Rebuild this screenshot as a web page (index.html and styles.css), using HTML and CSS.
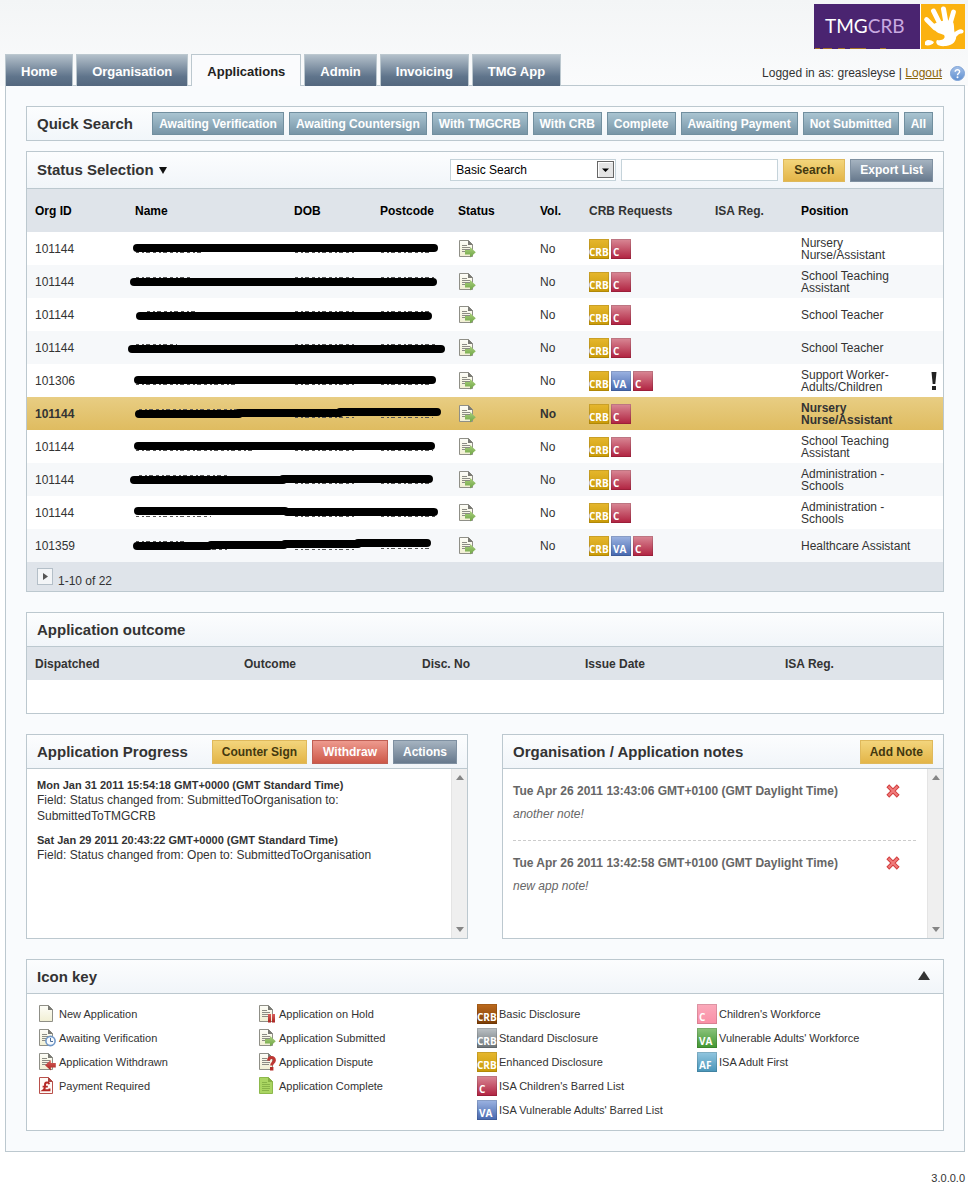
FILE: index.html
```html
<!DOCTYPE html>
<html lang="en">
<head>
<meta charset="utf-8">
<title>TMGCRB - Applications</title>
<link rel="stylesheet" href="styles.css">
</head>
<body>
<svg class="defs" width="0" height="0" aria-hidden="true">
  <defs>
    <linearGradient id="g-paper" x1="0" y1="0" x2="0" y2="1"><stop offset="0" stop-color="#fdfdf8"/><stop offset="1" stop-color="#f1efd3"/></linearGradient>
    <linearGradient id="g-green" x1="0" y1="0" x2="0" y2="1"><stop offset="0" stop-color="#a9d07c"/><stop offset="1" stop-color="#6da344"/></linearGradient>
    <linearGradient id="g-red" x1="0" y1="0" x2="0" y2="1"><stop offset="0" stop-color="#d9605c"/><stop offset="1" stop-color="#a82420"/></linearGradient>
    <linearGradient id="g-help" x1="0" y1="0" x2="0" y2="1"><stop offset="0" stop-color="#a5c1e8"/><stop offset="1" stop-color="#5f8fd0"/></linearGradient>
    <symbol id="page" viewBox="0 0 18 18">
      <path d="M1.500 .5H10.500L14.500 4.500V16.500H1.500Z" fill="url(#g-paper)" stroke="#8f8f87"/>
      <path d="M10 0L15 5H10Z" fill="#7b7b75"/>
    </symbol>
    <symbol id="lined" viewBox="0 0 18 18">
      <use href="#page" width="18" height="18"/>
      <path d="M4 5.500H9M4 7.500H12M4 9.500H12M4 11.500H11" stroke="#8c8c84" fill="none"/>
    </symbol>
    <symbol id="submitted" viewBox="0 0 18 18">
      <use href="#lined" width="18" height="18"/>
      <path d="M7 10H12V7L17.800 12.300L12 17.600V14.600H7Z" fill="url(#g-green)"/>
    </symbol>
    <symbol id="withdrawn" viewBox="0 0 18 18">
      <use href="#lined" width="18" height="18"/>
      <path d="M17.800 10H12.800V7L7 12.300L12.800 17.600V14.600H17.800Z" fill="url(#g-red)"/>
    </symbol>
    <symbol id="hold" viewBox="0 0 18 18">
      <use href="#lined" width="18" height="18"/>
      <path d="M10 9H13V17.500H10ZM14 9H17V17.500H14Z" fill="url(#g-red)"/>
    </symbol>
    <symbol id="verify" viewBox="0 0 18 18">
      <use href="#lined" width="18" height="18"/>
      <circle cx="12.500" cy="12" r="4.600" fill="#f8fbfe" stroke="#6f97c8" stroke-width="1.600"/>
      <path d="M12.500 9V12.500H15" fill="none" stroke="#4f6f9a"/>
    </symbol>
    <symbol id="dispute" viewBox="0 0 18 18">
      <use href="#lined" width="18" height="18"/>
      <path d="M10.500 7.600C10.700 3.400 16.800 3.500 16.400 7.500C16.200 9.800 13.600 9.700 13.600 12.600" fill="none" stroke="#bd3733" stroke-width="2.900"/>
      <rect x="12" y="14" width="3.400" height="3.500" fill="#b52e2a"/>
    </symbol>
    <symbol id="payment" viewBox="0 0 18 18">
      <path d="M1.500 .5H10.500L14.500 4.500V16.500H1.500Z" fill="#fffaf6" stroke="#b9504b"/>
      <path d="M10 0L15 5H10Z" fill="#a84440"/>
      <path d="M11.200 7.200C10.600 4.700 6.800 5 7 8C7.100 10 7.600 11.500 5.200 13.200H11.500V11.600M4.600 9.600H9.800" fill="none" stroke="#b52824" stroke-width="1.900"/>
    </symbol>
    <symbol id="complete" viewBox="0 0 18 18">
      <path d="M1.500 .5H10.500L14.500 4.500V16.500H1.500Z" fill="#aad562" stroke="#8db94c"/>
      <path d="M10 0L15 5H10Z" fill="#87b044"/>
      <path d="M4 5.500H9M4 7.500H12M4 9.500H12M4 11.500H12M4 13.500H11" stroke="#88b348" fill="none"/>
    </symbol>
    <symbol id="delete" viewBox="0 0 14 14">
      <path d="M3.200 3.200L10.800 10.800M10.800 3.200L3.200 10.800" stroke="#d23f3f" stroke-width="4" stroke-linecap="square"/>
      <path d="M2.500 2.500L11.500 11.500M11.500 2.500L2.500 11.500" stroke="#f07c7c" stroke-width="2"/>
    </symbol>
    <symbol id="arrow-up" viewBox="0 0 8 5"><path d="M4 0L8 5H0Z" fill="#858585"/></symbol>
    <symbol id="arrow-down" viewBox="0 0 8 5"><path d="M0 0H8L4 5Z" fill="#858585"/></symbol>
  </defs>
</svg>

<header class="top">
  <nav class="tabs" aria-label="Main">
    <a class="tab" href="#home">Home</a>
    <a class="tab" href="#organisation">Organisation</a>
    <a class="tab tab-active" href="#applications" aria-current="page">Applications</a>
    <a class="tab" href="#admin">Admin</a>
    <a class="tab" href="#invoicing">Invoicing</a>
    <a class="tab" href="#app">TMG App</a>
  </nav>
  <div class="account">
    <svg class="logo" width="151" height="45" viewBox="0 0 151 45" role="img" aria-label="TMGCRB">
      <rect width="151" height="45" fill="#fff"/>
      <rect width="106" height="45" fill="#4a2470"/>
      <rect x="107" width="44" height="45" fill="#fbb210"/>
      <text class="logo-text" x="11" y="29" fill="#fff">TMG<tspan fill="#c9aae0">CRB</tspan></text>
      <path d="M1 44.500H6M9 44.500H18M24 44.500H31M36 44.500H52M66 44.500H72" stroke="#a87428"/>
      <g fill="none" stroke="#fff" stroke-linecap="round" stroke-linejoin="round">
        <path d="M112.500 15.500L121 24" stroke-width="4.600"/>
        <path d="M119.500 7L126 20" stroke-width="5"/>
        <path d="M129.500 5L132 19" stroke-width="5"/>
        <path d="M139.500 8L136 20" stroke-width="4.800"/>
        <path d="M147.500 27.500C144 27 142 30 139 33" stroke-width="4.200"/>
      </g>
      <path d="M118 21C124 17 134 15 139 18C141 22 139 27 142 31C143 37 139 41 132 42C123 43 121 39 123 36C129 37 132 34 130 31C127 29 122 31 118 21Z" fill="#fff"/>
      <path d="M111 38C113 35 117 36 120 38C119 41 114 42 111 41Z" fill="#fff"/>
    </svg>
    <p class="login">Logged in as: greasleyse | <a class="logout" href="#logout">Logout</a><a class="help" href="#help" aria-label="Help"><svg width="15" height="15" viewBox="0 0 15 15" aria-hidden="true"><circle cx="7.500" cy="7.500" r="7" fill="url(#g-help)" stroke="#7fa3d6"/><path d="M5.200 5.700C5.400 3.100 9.800 3.200 9.600 5.700C9.500 7.200 7.500 7.300 7.500 9.200" fill="none" stroke="#fff" stroke-width="1.500"/><circle cx="7.500" cy="11.300" r="1" fill="#fff"/></svg></a></p>
  </div>
</header>

<main class="shell">
  <section class="panel quick">
    <h2 class="title">Quick Search</h2>
    <div class="buttons">
      <button class="btn btn-filter">Awaiting Verification</button>
      <button class="btn btn-filter">Awaiting Countersign</button>
      <button class="btn btn-filter">With TMGCRB</button>
      <button class="btn btn-filter">With CRB</button>
      <button class="btn btn-filter">Complete</button>
      <button class="btn btn-filter">Awaiting Payment</button>
      <button class="btn btn-filter">Not Submitted</button>
      <button class="btn btn-filter">All</button>
    </div>
  </section>

  <section class="panel list-panel">
    <div class="head head-tall">
      <h2 class="title"><button class="toggle">Status Selection <svg width="8" height="7" viewBox="0 0 8 7" aria-hidden="true"><path d="M0 0H8L4 7Z" fill="#111"/></svg></button></h2>
      <form class="buttons" role="search">
        <span class="select-wrap">
          <select class="select" aria-label="Search type"><option>Basic Search</option></select>
          <svg class="select-arrow" width="17" height="17" viewBox="0 0 17 17" aria-hidden="true"><rect x=".5" y=".5" width="16" height="16" fill="#e4e4e4" stroke="#666"/><path d="M1.500 15.500V1.500H15.500" fill="none" stroke="#fff"/><path d="M5 7.500H12L8.500 11Z" fill="#000"/></svg>
        </span>
        <input class="input" type="text" aria-label="Search text">
        <button class="btn btn-gold btn-search" type="button">Search</button>
        <button class="btn btn-slate" type="button">Export List</button>
      </form>
    </div>
    <table class="grid apps">
      <colgroup><col class="w-org"><col class="w-name"><col class="w-dob"><col class="w-post"><col class="w-status"><col class="w-vol"><col class="w-crb"><col class="w-isa"><col><col class="w-flag"></colgroup>
      <thead><tr><th>Org ID</th><th>Name</th><th>DOB</th><th>Postcode</th><th>Status</th><th>Vol.</th><th class="soft">CRB Requests</th><th class="soft">ISA Reg.</th><th>Position</th><th></th></tr></thead>
      <tbody>
        <tr><td>101144</td><td class="hidden-data" colspan="3"><svg width="323" height="33" role="img" aria-label="Redacted"><path class="trace" d="M9 20.500H75M168 20.500H229M254 20.500H303"/><path class="bar" d="M10 16H307"/></svg></td><td><svg class="doc" role="img" aria-label="Application Submitted"><use href="#submitted"/></svg></td><td>No</td><td><span class="badges"><span class="badge enhanced">CRB</span><span class="badge child">C</span></span></td><td></td><td>Nursery Nurse/Assistant</td><td></td></tr>
        <tr><td>101144</td><td class="hidden-data" colspan="3"><svg width="323" height="33" role="img" aria-label="Redacted"><path class="trace" d="M9 12.500H63M168 12.500H229M254 12.500H307"/><path class="bar" d="M7 17H306"/></svg></td><td><svg class="doc" role="img" aria-label="Application Submitted"><use href="#submitted"/></svg></td><td>No</td><td><span class="badges"><span class="badge enhanced">CRB</span><span class="badge child">C</span></span></td><td></td><td>School Teaching Assistant</td><td></td></tr>
        <tr><td>101144</td><td class="hidden-data" colspan="3"><svg width="323" height="33" role="img" aria-label="Redacted"><path class="trace" d="M20 13.500H71M168 13.500H229M254 13.500H303"/><path class="bar" d="M13 18H301"/></svg></td><td><svg class="doc" role="img" aria-label="Application Submitted"><use href="#submitted"/></svg></td><td>No</td><td><span class="badges"><span class="badge enhanced">CRB</span><span class="badge child">C</span></span></td><td></td><td>School Teacher</td><td></td></tr>
        <tr><td>101144</td><td class="hidden-data" colspan="3"><svg width="323" height="33" role="img" aria-label="Redacted"><path class="trace" d="M9 13.500H50M168 13.500H229M254 13.500H309"/><path class="bar" d="M5 18H314"/></svg></td><td><svg class="doc" role="img" aria-label="Application Submitted"><use href="#submitted"/></svg></td><td>No</td><td><span class="badges"><span class="badge enhanced">CRB</span><span class="badge child">C</span></span></td><td></td><td>School Teacher</td><td></td></tr>
        <tr><td>101306</td><td class="hidden-data" colspan="3"><svg width="323" height="33" role="img" aria-label="Redacted"><path class="trace" d="M9 20.500H110M168 20.500H229M254 20.500H305"/><path class="bar" d="M11 16H305"/></svg></td><td><svg class="doc" role="img" aria-label="Application Submitted"><use href="#submitted"/></svg></td><td>No</td><td><span class="badges"><span class="badge enhanced">CRB</span><span class="badge adult">VA</span><span class="badge child">C</span></span></td><td></td><td>Support Worker-Adults/Children</td><td class="flag"><svg width="6" height="18" viewBox="0 0 6 18" role="img" aria-label="Attention"><path d="M.5 0H5.500L4.300 12H1.700Z" fill="#222"/><rect x="1" y="14" width="4" height="4" fill="#222"/></svg></td></tr>
        <tr class="selected"><td>101144</td><td class="hidden-data" colspan="3"><svg width="323" height="33" role="img" aria-label="Redacted"><path class="trace" d="M12 12.500H112M168 20.500H229M254 20.500H306"/><path class="bar" d="M12 17H112M112 16H213M213 15H310"/></svg></td><td><svg class="doc" role="img" aria-label="Application Submitted"><use href="#submitted"/></svg></td><td>No</td><td><span class="badges"><span class="badge enhanced">CRB</span><span class="badge child">C</span></span></td><td></td><td>Nursery Nurse/Assistant</td><td></td></tr>
        <tr><td>101144</td><td class="hidden-data" colspan="3"><svg width="323" height="33" role="img" aria-label="Redacted"><path class="trace" d="M9 20.500H126M168 20.500H229M254 20.500H306"/><path class="bar" d="M11 16H304"/></svg></td><td><svg class="doc" role="img" aria-label="Application Submitted"><use href="#submitted"/></svg></td><td>No</td><td><span class="badges"><span class="badge enhanced">CRB</span><span class="badge child">C</span></span></td><td></td><td>School Teaching Assistant</td><td></td></tr>
        <tr><td>101144</td><td class="hidden-data" colspan="3"><svg width="323" height="33" role="img" aria-label="Redacted"><path class="trace" d="M12 12.500H100M168 20.500H229M254 20.500H303"/><path class="bar" d="M7 17H156M156 16H302"/></svg></td><td><svg class="doc" role="img" aria-label="Application Submitted"><use href="#submitted"/></svg></td><td>No</td><td><span class="badges"><span class="badge enhanced">CRB</span><span class="badge child">C</span></span></td><td></td><td>Administration - Schools</td><td></td></tr>
        <tr><td>101144</td><td class="hidden-data" colspan="3"><svg width="323" height="33" role="img" aria-label="Redacted"><path class="trace" d="M9 20.500H84M168 20.500H229M254 20.500H308"/><path class="bar" d="M11 15H158M160 16H307"/></svg></td><td><svg class="doc" role="img" aria-label="Application Submitted"><use href="#submitted"/></svg></td><td>No</td><td><span class="badges"><span class="badge enhanced">CRB</span><span class="badge child">C</span></span></td><td></td><td>Administration - Schools</td><td></td></tr>
        <tr><td>101359</td><td class="hidden-data" colspan="3"><svg width="323" height="33" role="img" aria-label="Redacted"><path class="trace" d="M9 12.500H60M75 20.500H102M168 20.500H229M254 19.500H303"/><path class="bar" d="M10 17H82M84 16H157M158 15H231M231 14H300"/></svg></td><td><svg class="doc" role="img" aria-label="Application Submitted"><use href="#submitted"/></svg></td><td>No</td><td><span class="badges"><span class="badge enhanced">CRB</span><span class="badge adult">VA</span><span class="badge child">C</span></span></td><td></td><td>Healthcare Assistant</td><td></td></tr>
      </tbody>
    </table>
    <div class="pager">
      <button class="next" aria-label="Next page"><svg width="5" height="7" viewBox="0 0 5 7" aria-hidden="true"><path d="M0 0L5 3.500L0 7Z" fill="#555"/></svg></button>
      <span class="range">1-10 of 22</span>
    </div>
  </section>

  <section class="panel">
    <div class="head"><h2 class="title">Application outcome</h2></div>
    <table class="grid outcome">
      <colgroup><col class="w-dispatched"><col class="w-outcome"><col class="w-disc"><col class="w-issue"><col></colgroup>
      <thead><tr><th>Dispatched</th><th>Outcome</th><th>Disc. No</th><th>Issue Date</th><th>ISA Reg.</th></tr></thead>
      <tbody><tr><td colspan="5"></td></tr></tbody>
    </table>
  </section>

  <div class="pair">
    <section class="panel">
      <div class="head">
        <h2 class="title">Application Progress</h2>
        <div class="buttons">
          <button class="btn btn-gold btn-wide">Counter Sign</button>
          <button class="btn btn-red btn-wide">Withdraw</button>
          <button class="btn btn-slate btn-wide">Actions</button>
        </div>
      </div>
      <div class="feed">
        <div class="feed-body progress">
          <h3 class="when">Mon Jan 31 2011 15:54:18 GMT+0000 (GMT Standard Time)</h3>
          <p class="what">Field: Status changed from: SubmittedToOrganisation to: SubmittedToTMGCRB</p>
          <h3 class="when">Sat Jan 29 2011 20:43:22 GMT+0000 (GMT Standard Time)</h3>
          <p class="what">Field: Status changed from: Open to: SubmittedToOrganisation</p>
        </div>
        <div class="scroll" aria-hidden="true"><svg width="8" height="5"><use href="#arrow-up"/></svg><svg width="8" height="5"><use href="#arrow-down"/></svg></div>
      </div>
    </section>
    <section class="panel">
      <div class="head">
        <h2 class="title">Organisation / Application notes</h2>
        <div class="buttons"><button class="btn btn-gold btn-wide">Add Note</button></div>
      </div>
      <div class="feed">
        <div class="feed-body notes">
          <article class="note">
            <div class="note-head"><h3 class="note-when">Tue Apr 26 2011 13:43:06 GMT+0100 (GMT Daylight Time)</h3><button class="delete" aria-label="Delete note"><svg width="14" height="14"><use href="#delete"/></svg></button></div>
            <p class="note-text">another note!</p>
          </article>
          <article class="note">
            <div class="note-head"><h3 class="note-when">Tue Apr 26 2011 13:42:58 GMT+0100 (GMT Daylight Time)</h3><button class="delete" aria-label="Delete note"><svg width="14" height="14"><use href="#delete"/></svg></button></div>
            <p class="note-text">new app note!</p>
          </article>
        </div>
        <div class="scroll" aria-hidden="true"><svg width="8" height="5"><use href="#arrow-up"/></svg><svg width="8" height="5"><use href="#arrow-down"/></svg></div>
      </div>
    </section>
  </div>

  <section class="panel">
    <div class="head">
      <h2 class="title">Icon key</h2>
      <button class="collapse" aria-label="Collapse icon key"><svg width="12" height="9" viewBox="0 0 12 9" aria-hidden="true"><path d="M6 0L12 9H0Z" fill="#333"/></svg></button>
    </div>
    <div class="key">
      <ul class="key-col">
        <li><span class="key-doc"><svg class="doc"><use href="#page"/></svg></span>New Application</li>
        <li><span class="key-doc"><svg class="doc"><use href="#verify"/></svg></span>Awaiting Verification</li>
        <li><span class="key-doc"><svg class="doc"><use href="#withdrawn"/></svg></span>Application Withdrawn</li>
        <li><span class="key-doc"><svg class="doc"><use href="#payment"/></svg></span>Payment Required</li>
      </ul>
      <ul class="key-col">
        <li><span class="key-doc"><svg class="doc"><use href="#hold"/></svg></span>Application on Hold</li>
        <li><span class="key-doc"><svg class="doc"><use href="#submitted"/></svg></span>Application Submitted</li>
        <li><span class="key-doc"><svg class="doc"><use href="#dispute"/></svg></span>Application Dispute</li>
        <li><span class="key-doc"><svg class="doc"><use href="#complete"/></svg></span>Application Complete</li>
      </ul>
      <ul class="key-col">
        <li><span class="badge basic">CRB</span>Basic Disclosure</li>
        <li><span class="badge standard">CRB</span>Standard Disclosure</li>
        <li><span class="badge enhanced">CRB</span>Enhanced Disclosure</li>
        <li><span class="badge child">C</span>ISA Children's Barred List</li>
        <li><span class="badge adult">VA</span>ISA Vulnerable Adults' Barred List</li>
      </ul>
      <ul class="key-col">
        <li><span class="badge child-work">C</span>Children's Workforce</li>
        <li><span class="badge adult-work">VA</span>Vulnerable Adults' Workforce</li>
        <li><span class="badge first">AF</span>ISA Adult First</li>
      </ul>
    </div>
  </section>
</main>
<footer class="version">3.0.0.0</footer>
</body>
</html>
```
FILE: styles.css
```css
* { box-sizing: border-box; }

body {
  margin: 0;
  padding: 0 3px 0 5px;
  background: #fff linear-gradient(#f3f5f6, #fafbfc 86px, #fff 86px) no-repeat;
  color: #333;
  font: 12px/16px "Liberation Sans", Arial, sans-serif;
}

h2, h3, p, ul { margin: 0; padding: 0; }
li { list-style: none; }
button, input, select { font: inherit; color: inherit; margin: 0; }
button { padding: 0; border: 0; background: none; cursor: pointer; }
svg { display: block; flex: none; }
.defs { position: absolute; }

/* Header */
.top { display: flex; justify-content: space-between; align-items: flex-end; height: 85px; }
.tabs { display: flex; gap: 3px; margin-bottom: -1px; position: relative; }
.tab {
  height: 32px;
  padding: 0 15px;
  border: 1px solid #bcc8cf;
  border-bottom: 0;
  background: linear-gradient(#b3c0ca, #5f748b 70%, #54687f);
  color: #fff;
  font-size: 13px;
  font-weight: bold;
  line-height: 34px;
  text-decoration: none;
}
.tab-active { background: #fafbfd; color: #222; }
.account { align-self: stretch; display: flex; flex-direction: column; align-items: flex-end; justify-content: space-between; padding: 4px 0; }
.logo-text { font: 19px Lato, sans-serif; }
.login { display: flex; align-items: center; white-space: pre; }
.logout { color: #8a6508; }
.help { margin-left: 8px; }

/* Panels */
.shell { display: flow-root; padding: 20px; border: 1px solid #bcc8cf; background: #f9fbfd; }
.panel { margin-bottom: 20px; border: 1px solid #bcc8cf; background: #fff; }
.panel:last-child { margin-bottom: 0; }
.quick { display: flex; justify-content: space-between; align-items: center; min-height: 35px; margin-bottom: 10px; padding: 0 10px; background: linear-gradient(#fcfdfe, #f1f6fa); }
.head { display: flex; justify-content: space-between; align-items: center; min-height: 34px; padding: 0 10px; border-bottom: 1px solid #bcc8cf; background: linear-gradient(#fcfdfe, #f1f5f9); }
.head-tall { min-height: 37px; }
.title { font-size: 15px; font-weight: bold; line-height: 20px; white-space: nowrap; }
.toggle { display: flex; align-items: center; gap: 5px; font-weight: bold; }
.buttons { display: flex; align-items: center; gap: 5px; }
.btn { height: 23px; padding: 0 9px; border: 1px solid; font-weight: bold; white-space: nowrap; }
.btn-filter { padding: 0 6px; border-color: #718f9f; background: linear-gradient(#a9c4d1, #7795a7); color: #fff; }
.btn-gold { border-color: #dfb95c; background: linear-gradient(#f3d57c, #e3b548); color: #43380f; }
.btn-slate { border-color: #7f90a1; background: linear-gradient(#a5b3c0, #67798d); color: #fff; }
.btn-red { border-color: #bf5f54; background: linear-gradient(#ee9a8e, #cd5849); color: #fff; }
.btn-wide { height: 24px; }
.btn-red, .btn-search { padding: 0 10px; }

.select-wrap { position: relative; }
.select { display: block; width: 166px; height: 22px; padding: 0 20px 0 5px; border: 1px solid #c5d3da; border-radius: 0; background: #fff; color: #000; appearance: none; }
.select-arrow { position: absolute; top: 2px; right: 2px; pointer-events: none; }
.input { width: 157px; height: 22px; padding: 0 4px; border: 1px solid #c5d3da; background: #fff; }

/* Tables */
.grid { width: 100%; border-collapse: collapse; table-layout: fixed; }
.grid th, .grid td { padding: 0 0 0 8px; text-align: left; vertical-align: middle; }
.grid th { height: 33px; background: #dfe4ea; }
.grid td { height: 33px; line-height: 12px; }
.apps th { height: 43px; color: #000; }
.apps .soft { color: #333; }
.apps tbody tr:nth-child(even) { background: #f6f8fa; }
.apps tbody tr.selected:nth-child(n) { background: linear-gradient(#e8cd83, #dfbc60); font-weight: bold; }
.apps .hidden-data { padding: 0; }
.apps .flag { padding: 0 0 0 14px; }
.bar { fill: none; stroke: #000; stroke-width: 8px; stroke-linecap: round; }
.trace { fill: none; stroke: #555; stroke-width: 1px; stroke-dasharray: 3 3 2 2 4 3; }
.w-org { width: 100px; }
.w-name { width: 159px; }
.w-dob { width: 86px; }
.w-post { width: 78px; }
.w-status { width: 82px; }
.w-vol { width: 49px; }
.w-crb { width: 126px; }
.w-isa { width: 86px; }
.w-flag { width: 26px; }
.w-dispatched { width: 209px; }
.w-outcome { width: 178px; }
.w-disc { width: 163px; }
.w-issue { width: 200px; }

.pager { display: flex; align-items: center; gap: 5px; height: 29px; padding: 0 10px; background: #dfe4ea; }
.next { display: grid; place-items: center; width: 16px; height: 17px; border: 1px solid #b4bfc8; background: #f3f5f7; }
.range { padding-top: 8px; }

/* Icons and badges */
.doc { width: 18px; height: 18px; }
.badges { display: flex; gap: 2px; }
.badge {
  flex: none;
  width: 20px;
  height: 20px;
  padding: 7px 0 0 2px;
  color: #fff;
  font: bold 10px/12px "Open Sans", sans-serif;
  box-shadow: inset 0 0 0 1px rgba(0, 0, 0, .12);
}
.enhanced { padding-left: 0; background: linear-gradient(#e6b72e, #c99a08); }
.basic { padding-left: 0; background: linear-gradient(#bd6a1d, #7c3d05); }
.standard { padding-left: 0; background: linear-gradient(#bcc2c6, #6c7377); }
.child { background: linear-gradient(#d98996, #b0213f); }
.adult { background: linear-gradient(#9db4e2, #4567ae); }
.child-work { background: linear-gradient(#fbaabb, #f98fa6); }
.adult-work { background: linear-gradient(#8cc47c, #409631); }
.first { background: linear-gradient(#93c7e0, #4895b8); }

/* Progress and notes */
.pair { display: grid; grid-template-columns: 1fr 1fr; gap: 34px; margin-bottom: 20px; }
.pair .panel { margin-bottom: 0; }
.feed { display: flex; height: 169px; }
.feed-body { flex: 1; min-width: 0; overflow: hidden; }
.progress { padding: 9px 40px 0 10px; }
.when { font-size: 11px; line-height: 14px; }
.what { margin-bottom: 9px; }
.notes { padding: 0 11px 0 10px; color: #666; }
.note { padding: 12px 0 16px; border-bottom: 1px dashed #ccc; }
.note:last-child { border-bottom: 0; }
.note-head { display: flex; justify-content: space-between; align-items: center; height: 20px; padding-right: 16px; }
.note-when { font-size: 12px; line-height: 20px; }
.note-text { margin-top: 3px; font-style: italic; line-height: 20px; }
.scroll { display: flex; flex-direction: column; justify-content: space-between; align-items: center; width: 16px; padding: 6px 0; border-left: 1px solid #e4e4e4; background: #efefef; }

/* Icon key */
.collapse { padding: 0 3px 2px; }
.key { display: grid; grid-template-columns: repeat(4, 1fr); padding: 8px 26px 8px 10px; font-size: 11px; }
.key li { display: flex; align-items: center; gap: 2px; height: 24px; white-space: nowrap; }
.key-doc { width: 20px; padding-left: 1px; }

.version { padding: 18px 0; font-size: 11px; text-align: right; }
```
